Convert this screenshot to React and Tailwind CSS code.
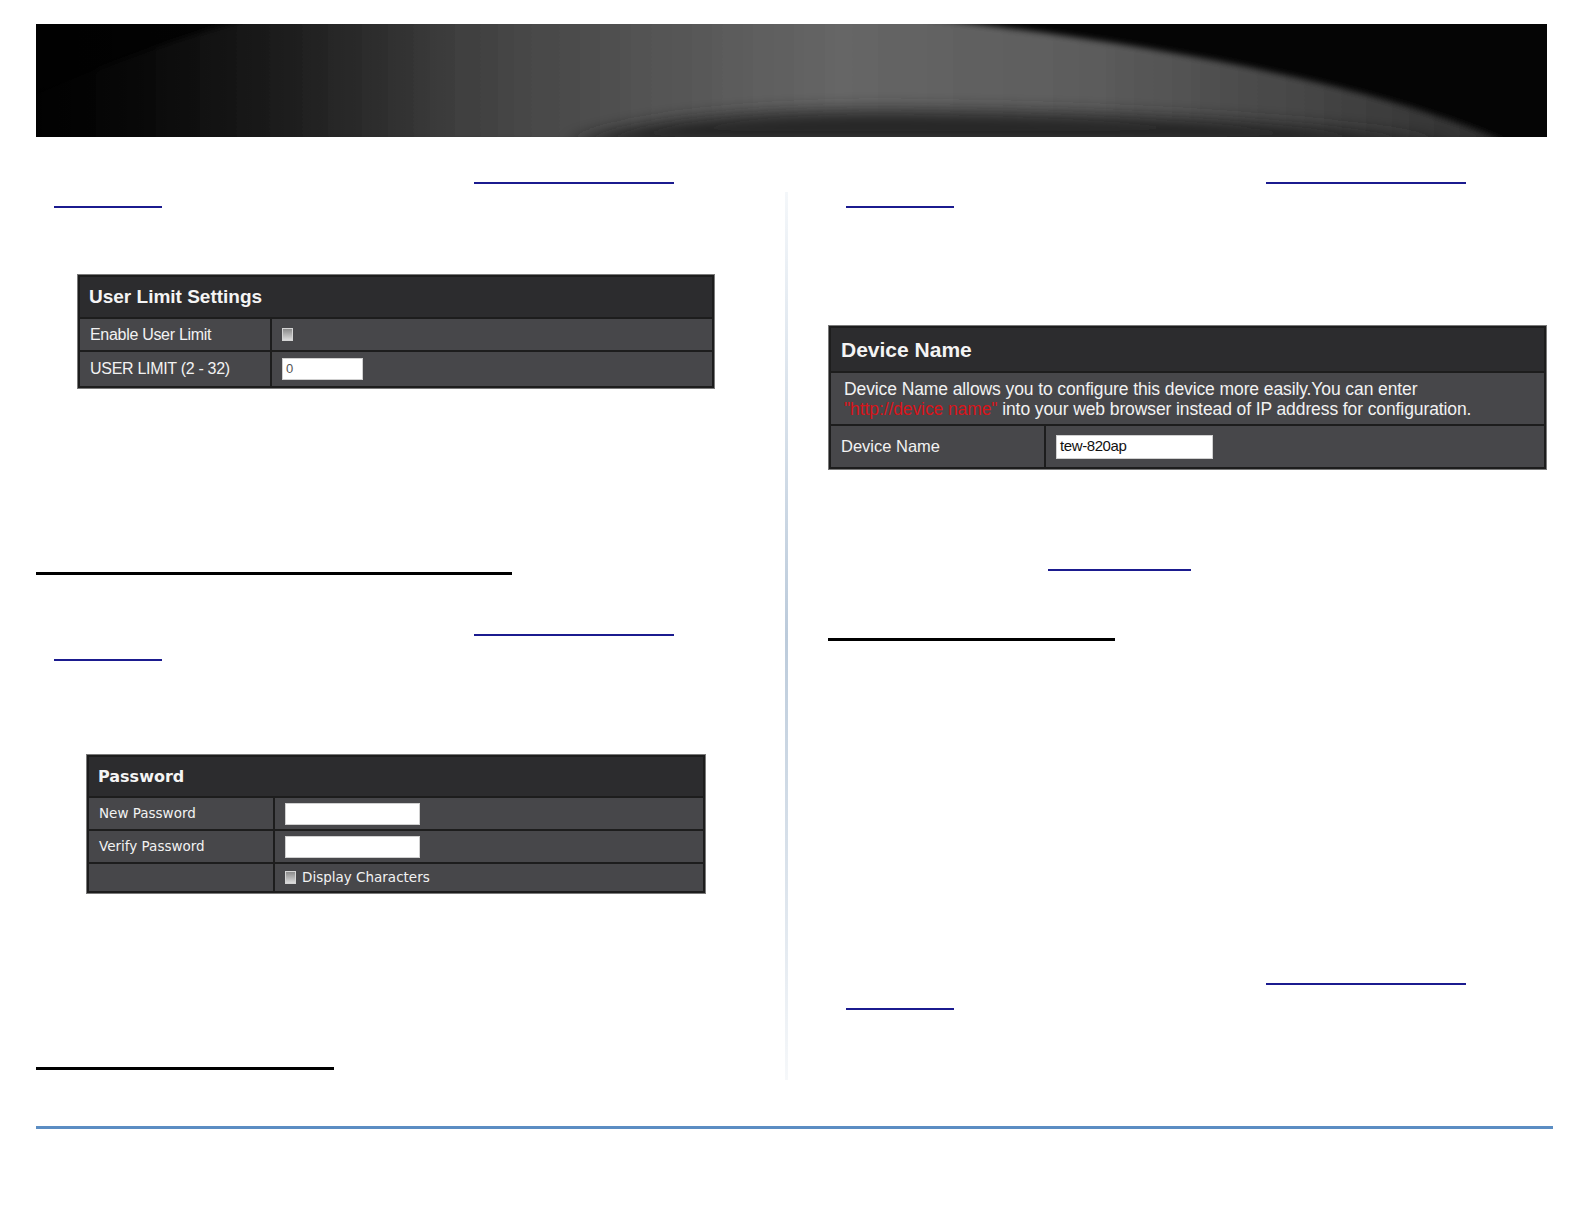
import React from 'react'

// underline-only link marks, as they appear in the page
function LinkMark({ left, width, top }) {
  return <div className={`h-[2px] bg-[#1b1b8f] ${top} ${left} ${width}`} />
}

function Banner() {
  return (
    <div className="h-[113px] w-full bg-[#050505]">
      <svg viewBox="0 0 1511 113" preserveAspectRatio="none" className="block h-full w-full">
        <defs>
          <linearGradient id="band" x1="0" y1="0" x2="1" y2="0">
            <stop offset="0" stopColor="#080808" />
            <stop offset="0.15" stopColor="#262626" />
            <stop offset="0.35" stopColor="#494949" />
            <stop offset="0.55" stopColor="#666666" />
            <stop offset="0.72" stopColor="#5c5c5c" />
            <stop offset="0.88" stopColor="#434343" />
            <stop offset="1" stopColor="#2e2e2e" />
          </linearGradient>
          <linearGradient id="fadeLeft" x1="0" y1="0" x2="1" y2="0">
            <stop offset="0" stopColor="#000" stopOpacity="0.9" />
            <stop offset="0.1" stopColor="#000" stopOpacity="0.5" />
            <stop offset="0.28" stopColor="#000" stopOpacity="0" />
          </linearGradient>
          <linearGradient id="lowBand" x1="0" y1="0" x2="0" y2="1">
            <stop offset="0" stopColor="#303030" />
            <stop offset="1" stopColor="#1e1e1e" />
          </linearGradient>
          <filter id="soft" x="-10%" y="-50%" width="120%" height="200%">
            <feGaussianBlur stdDeviation="3" />
          </filter>
          <filter id="softer" x="-10%" y="-50%" width="120%" height="200%">
            <feGaussianBlur stdDeviation="8" />
          </filter>
        </defs>
        <path
          d="M 230 -10 L 850 -10 C 1100 15 1340 60 1470 118 L -10 118 L -10 75 C 70 40 150 10 230 -10 Z"
          fill="url(#band)"
          filter="url(#soft)"
        />
        <path
          d="M 530 120 C 600 96 720 84 880 86 C 1080 88 1280 98 1420 120 Z"
          fill="url(#lowBand)"
          filter="url(#softer)"
        />
        <path d="M 0 0 L 1511 0 L 1511 113 L 0 113 Z" fill="url(#fadeLeft)" />
      </svg>
    </div>
  )
}

function Checkbox() {
  return <div className="h-[13px] w-[11px] shrink-0 border border-[#d4d4d4] bg-linear-to-b from-[#8c8c8c] to-[#dcdcdc]" />
}

function Panel({ width, children }) {
  return (
    <div className={`${width} border border-[#7a7a7a] bg-[#1d1d1d] p-[2px]`}>
      <div className="flex flex-col gap-[2px]">{children}</div>
    </div>
  )
}

function Row({ label, labelW, height, font, children }) {
  return (
    <div className={`flex gap-[2px] ${height}`}>
      <div className={`${labelW} flex items-center bg-[#47474a] pl-[10px] text-[#f2f2f2] ${font}`}>{label}</div>
      <div className="flex flex-1 items-center bg-[#47474a] pl-[10px]">{children}</div>
    </div>
  )
}

function UserLimitPanel() {
  const font = "font-['Liberation_Sans',Arial,sans-serif] text-[16px] tracking-[-0.3px]"
  return (
    <Panel width="w-[638px]">
      <div className="flex h-[40px] items-center bg-[#2c2c2e] pl-[9px] font-['Liberation_Sans',Arial,sans-serif] text-[19px] font-bold text-[#f4f4f4]">
        User Limit Settings
      </div>
      <Row label="Enable User Limit" labelW="w-[190px]" height="h-[31px]" font={font}>
        <Checkbox />
      </Row>
      <Row label="USER LIMIT (2 - 32)" labelW="w-[190px]" height="h-[34px]" font={font}>
        <div className="flex h-[22px] w-[81px] items-center border border-[#cfcfcf] bg-white pl-[3px] font-['Liberation_Sans',Arial,sans-serif] text-[13px] text-[#555]">
          0
        </div>
      </Row>
    </Panel>
  )
}

function PasswordPanel() {
  const font = "font-['DejaVu_Sans',Verdana,sans-serif] text-[13.5px]"
  return (
    <Panel width="w-[620px]">
      <div className="flex h-[39px] items-center bg-[#2c2c2e] pl-[9px] font-['DejaVu_Sans',Verdana,sans-serif] text-[16px] font-bold text-[#f4f4f4]">
        Password
      </div>
      <Row label="New Password" labelW="w-[184px]" height="h-[31px]" font={font}>
        <div className="h-[22px] w-[135px] border border-[#d0d0d0] bg-white" />
      </Row>
      <Row label="Verify Password" labelW="w-[184px]" height="h-[31px]" font={font}>
        <div className="h-[22px] w-[135px] border border-[#d0d0d0] bg-white" />
      </Row>
      <Row label="" labelW="w-[184px]" height="h-[27px]" font={font}>
        <div className="flex items-center gap-[6px] font-['DejaVu_Sans',Verdana,sans-serif] text-[13.5px] text-[#f2f2f2]">
          <Checkbox />
          Display Characters
        </div>
      </Row>
    </Panel>
  )
}

function DeviceNamePanel() {
  const font = "font-['Liberation_Sans',Arial,sans-serif] text-[16.5px]"
  return (
    <Panel width="w-[719px]">
      <div className="flex h-[43px] items-center bg-[#2c2c2e] pl-[10px] font-['Liberation_Sans',Arial,sans-serif] text-[21px] font-bold text-[#f4f4f4]">
        Device Name
      </div>
      <div className="flex h-[51px] flex-col justify-center bg-[#47474a] pl-[13px] font-['Liberation_Sans',Arial,sans-serif] text-[17.5px] leading-[20px] tracking-[-0.1px] text-[#f2f2f2]">
        <div>Device Name allows you to configure this device more easily.You can enter</div>
        <div>
          <span className="text-[#d8141a]">"http://device name"</span> into your web browser instead of IP address for configuration.
        </div>
      </div>
      <Row label="Device Name" labelW="w-[213px]" height="h-[41px]" font={font}>
        <div className="flex h-[24px] w-[157px] items-center border border-[#d0d0d0] bg-white pl-[3px] font-['Liberation_Sans',Arial,sans-serif] text-[15px] tracking-[-0.4px] text-[#111]">
          tew-820ap
        </div>
      </Row>
    </Panel>
  )
}

export default function App() {
  return (
    <div className="h-[1224px] w-[1584px] bg-white">
      <div className="pl-[36px] pr-[37px] pt-[24px]">
        <Banner />
      </div>

      <div className="flex pl-[36px]">
        {/* left column */}
        <div className="flex w-[749px] flex-col">
          <LinkMark top="mt-[45px]" left="ml-[438px]" width="w-[200px]" />
          <LinkMark top="mt-[22px]" left="ml-[18px]" width="w-[108px]" />
          <div className="ml-[41px] mt-[66px]">
            <UserLimitPanel />
          </div>
          <div className="mt-[183px] h-[3px] w-[476px] bg-black" />
          <LinkMark top="mt-[59px]" left="ml-[438px]" width="w-[200px]" />
          <LinkMark top="mt-[23px]" left="ml-[18px]" width="w-[108px]" />
          <div className="ml-[50px] mt-[93px]">
            <PasswordPanel />
          </div>
          <div className="mt-[173px] h-[3px] w-[298px] bg-black" />
        </div>

        {/* column divider */}
        <div className="mt-[55px] h-[888px] w-[3px] bg-linear-to-b from-[#f4f7fa] via-[#bccbdb] to-[#f6f8fa]" />

        {/* right column */}
        <div className="ml-[40px] flex w-[719px] flex-col">
          <LinkMark top="mt-[45px]" left="ml-[438px]" width="w-[200px]" />
          <LinkMark top="mt-[22px]" left="ml-[18px]" width="w-[108px]" />
          <div className="mt-[117px]">
            <DeviceNamePanel />
          </div>
          <LinkMark top="mt-[99px]" left="ml-[220px]" width="w-[143px]" />
          <div className="mt-[67px] h-[3px] w-[287px] bg-black" />
          <LinkMark top="mt-[342px]" left="ml-[438px]" width="w-[200px]" />
          <LinkMark top="mt-[23px]" left="ml-[18px]" width="w-[108px]" />
        </div>
      </div>

      <div className="ml-[36px] mt-[46px] h-[3px] w-[1517px] bg-[#5b8dc3]" />
    </div>
  )
}
